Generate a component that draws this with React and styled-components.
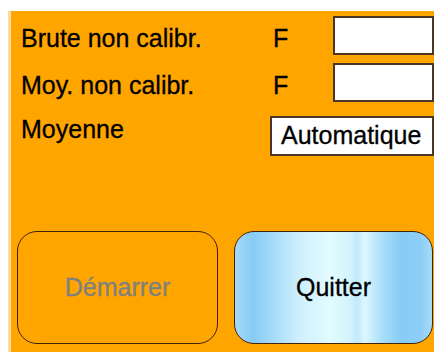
import React from "react";
import styled, { createGlobalStyle } from "styled-components";

const Global = createGlobalStyle`
  html, body { margin: 0; padding: 0; background: #ffffff; overflow: hidden; }
  body { font-family: "Liberation Sans", Arial, sans-serif; }
  #root { padding: 11px 0 0 8px; }
`;

const Panel = styled.div`
  height: 341px;
  box-sizing: border-box;
  background: #ffa500;
  border-left: 3px solid #fcd9a2;
  padding: 5px 0 0 6px;
  display: flex;
  flex-direction: column;
  overflow: hidden;
`;

const Row = styled.div`
  display: grid;
  grid-template-columns: ${(p) => p.$cols};
  align-items: start;
  height: ${(p) => p.$h}px;
  margin-top: ${(p) => p.$mt || 0}px;
  padding-left: 4px;
`;

const Label = styled.div`
  font-size: 25px;
  line-height: 30px;
  color: #000;
  -webkit-text-stroke: 0.3px #000;
  margin-top: ${(p) => p.$off}px;
  white-space: nowrap;
`;

const Field = styled.div`
  box-sizing: border-box;
  height: ${(p) => p.$h}px;
  background: #ffffff;
  border: 2px solid #4a3626;
  font-size: 25px;
  line-height: 30px;
  color: #000;
  -webkit-text-stroke: 0.3px #000;
  padding: 2px 0 0 9px;
  white-space: nowrap;
`;

const ButtonRow = styled.div`
  display: flex;
  gap: 16px;
  margin-top: 75px;
`;

const Button = styled.div`
  box-sizing: border-box;
  width: ${(p) => p.$w}px;
  height: 113px;
  border: 1.5px solid #3e220c;
  border-radius: 20px;
  display: flex;
  align-items: center;
  justify-content: center;
  font-size: 25px;
  color: ${(p) => (p.$disabled ? "#808080" : "#000")};
  -webkit-text-stroke: 0.3px ${(p) => (p.$disabled ? "#808080" : "#000")};
  background: ${(p) =>
    p.$disabled
      ? "transparent"
      : "linear-gradient(to right, #a6daf8 0%, #86cbf6 9%, #a2d8f8 18%, #cdeffd 32%, #e2fbff 48%, #d4f3fd 58%, #c2eafc 62%, #dcf8ff 66%, #ade0f9 74%, #88ccf6 84%, #8ccef7 94%, #a6daf8 100%)"};
`;

export default function App() {
  return (
    <>
      <Global />
      <Panel>
        <Row $cols="252px 60px 101px" $h={39}>
          <Label $off={7}>Brute non calibr.</Label>
          <Label $off={7}>F</Label>
          <Field $h={39} />
        </Row>
        <Row $cols="252px 60px 101px" $h={39} $mt={8}>
          <Label $off={7}>Moy. non calibr.</Label>
          <Label $off={7}>F</Label>
          <Field $h={39} />
        </Row>
        <Row $cols="249px 164px" $h={40} $mt={14}>
          <Label $off={-2}>Moyenne</Label>
          <Field $h={40}>Automatique</Field>
        </Row>
        <ButtonRow>
          <Button $w={201} $disabled>
            Démarrer
          </Button>
          <Button $w={199}>Quitter</Button>
        </ButtonRow>
      </Panel>
    </>
  );
}
